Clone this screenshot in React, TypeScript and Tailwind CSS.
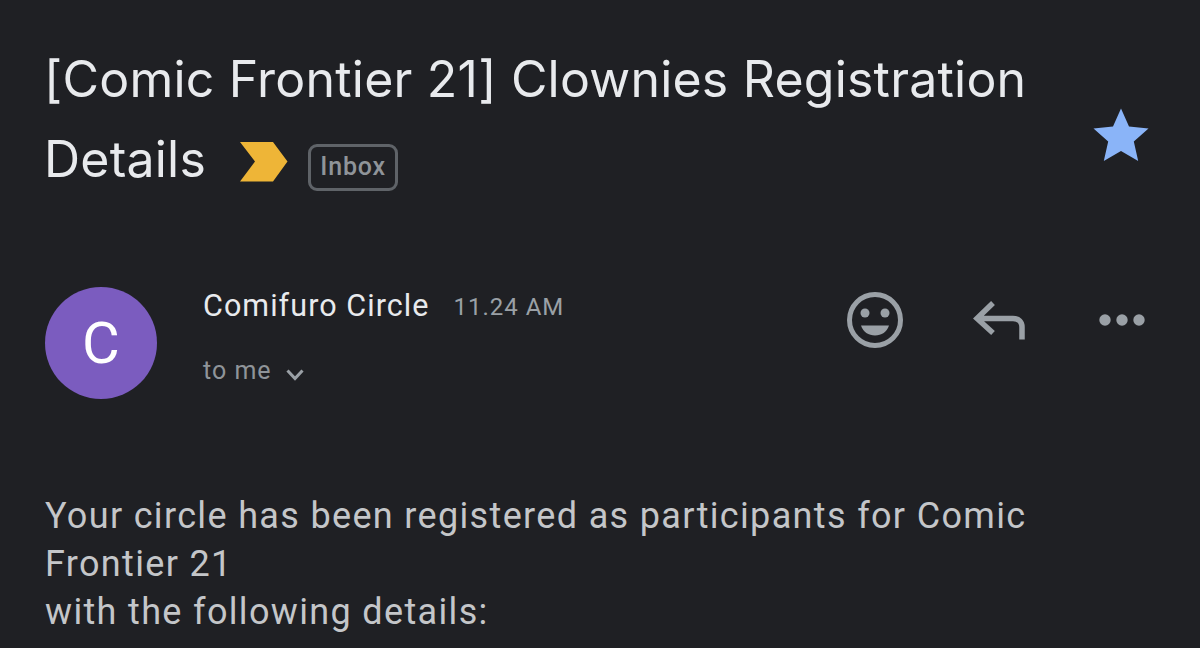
import React from 'react';

const Arrow = () => (
  <svg width="48" height="40" viewBox="0 0 48 40" className="mt-[5px]">
    <path d="M0 0H33L47.500 19.500L33 39.500H0L15 19.500Z" fill="#eeb537" />
  </svg>
);

const Star = () => (
  <svg width="56" height="54" viewBox="0 0 56 54">
    <path d="M28 0.500L36 18.500L55.500 20.500L40.800 33.500L45.200 53L28 43L10.800 53L15.200 33.500L0.500 20.500L20 18.500Z" fill="#8ab4f8" />
  </svg>
);

const Smile = () => (
  <svg width="56" height="56" viewBox="0 0 56 56">
    <circle cx="28" cy="28" r="25.500" fill="none" stroke="#9aa0a6" strokeWidth="5" />
    <circle cx="18" cy="21" r="4.500" fill="#9aa0a6" />
    <circle cx="38" cy="21" r="4.500" fill="#9aa0a6" />
    <path d="M14 33.500H42C40 40 34.500 43.500 28 43.500C21.500 43.500 16 40 14 33.500Z" fill="#9aa0a6" />
  </svg>
);

const Reply = () => (
  <svg width="52" height="40" viewBox="0 0 52 40">
    <path d="M20 3L4 18.500L20 33M4 18.500H40C46 18.500 49 22 49 27V39.500" fill="none" stroke="#9aa0a6" strokeWidth="5.500" />
  </svg>
);

const Dots = () => (
  <svg width="46" height="14" viewBox="0 0 46 14">
    <circle cx="6" cy="7" r="5.700" fill="#9aa0a6" />
    <circle cx="23" cy="7" r="5.700" fill="#9aa0a6" />
    <circle cx="40" cy="7" r="5.700" fill="#9aa0a6" />
  </svg>
);

const Chevron = () => (
  <svg width="18" height="12" viewBox="0 0 18 12">
    <path d="M1.500 1.500L9 9.500L16.500 1.500" fill="none" stroke="#9aa0a6" strokeWidth="3" />
  </svg>
);

export default function App() {
  return (
    <div className="w-[1200px] h-[648px] overflow-hidden bg-[#1f2024] pl-[46px] pr-[51px] pt-[39px] font-['Roboto',sans-serif]">
      <div className="flex items-start justify-between">
        <div className="w-[1000px] -ml-[2px]">
          <h1 className="font-['Inter',sans-serif] font-normal text-[50px] tracking-[0.22px] leading-[80px] text-[#e8eaed] whitespace-nowrap">
            [Comic Frontier 21] Clownies Registration
          </h1>
          <div className="flex items-center h-[80px]">
            <span className="font-['Inter',sans-serif] font-normal text-[50px] tracking-[0.22px] leading-[80px] text-[#e8eaed]">
              Details
            </span>
            <span className="ml-[34px]"><Arrow /></span>
            <span className="ml-[20px] mt-[16px] h-[47px] w-[90px] rounded-[9px] border-[3px] border-[#5f6368] flex items-center justify-center text-[25px] font-medium tracking-[0.8px] text-[#8f9499]">
              Inbox
            </span>
          </div>
        </div>
        <div className="mt-[69px]"><Star /></div>
      </div>

      <div className="mt-[88px] -ml-[1px] flex items-start">
        <div className="w-[112px] h-[112px] rounded-full bg-[#7b5cbf] flex items-center justify-center text-white text-[58px] shrink-0">
          C
        </div>
        <div className="ml-[46px] -mt-[4px] flex-1">
          <div className="flex items-baseline h-[36px]">
            <span className="text-[30.500px] tracking-[1.050px] text-[#e8eaed]">Comifuro Circle</span>
            <span className="ml-[24px] text-[24px] tracking-[1px] text-[#9aa0a6] -translate-y-[1px]">11.24 AM</span>
          </div>
          <div className="mt-[33px] flex items-center">
            <span className="text-[25px] tracking-[1px] text-[#8f9499]">to me</span>
            <span className="ml-[14px] mt-[8px]"><Chevron /></span>
          </div>
        </div>
        <div className="flex items-center mt-[5px] mr-[4px]">
          <Smile />
          <span className="ml-[70px]"><Reply /></span>
          <span className="ml-[74px]"><Dots /></span>
        </div>
      </div>

      <div className="mt-[93px] -ml-[1px] w-[1040px] text-[36px] leading-[48px] tracking-[1.340px] text-[#c4c6c9]">
        <p>Your circle has been registered as participants for Comic Frontier 21</p>
        <p>with the following details:</p>
      </div>
    </div>
  );
}
